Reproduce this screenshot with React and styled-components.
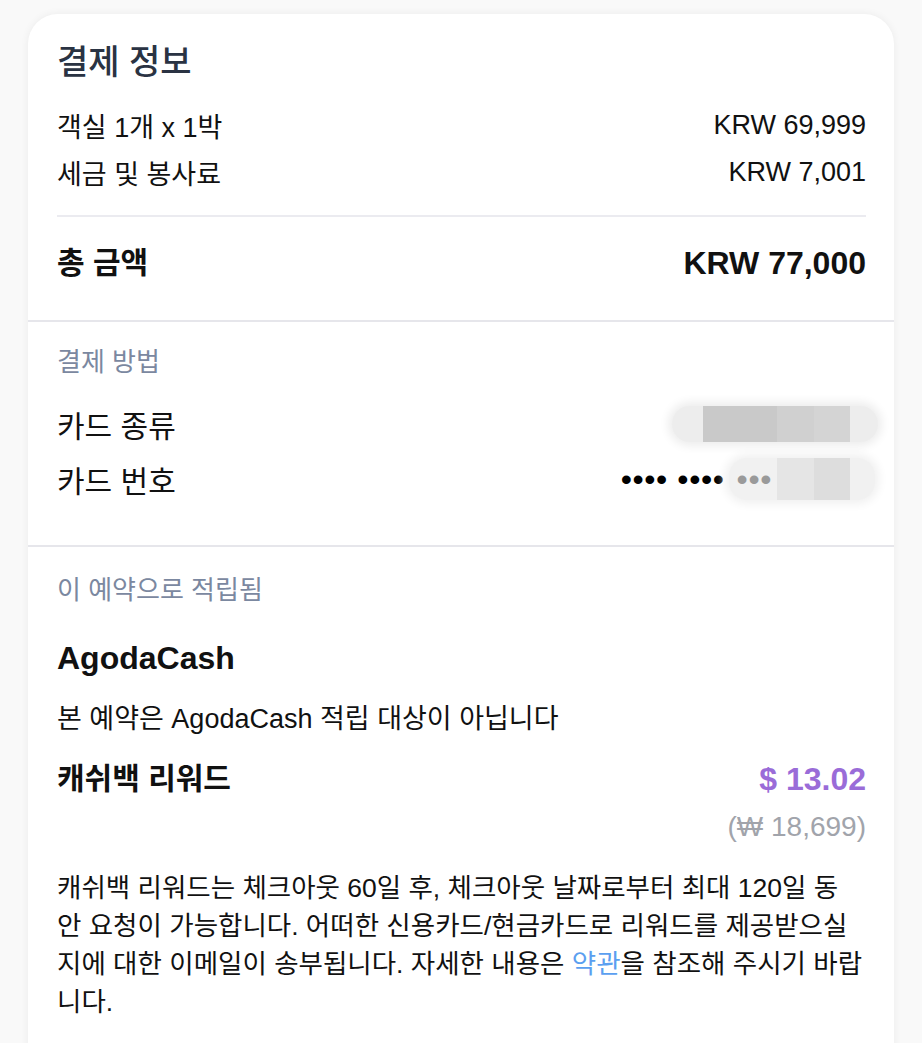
import React from "react";
import styled, { createGlobalStyle } from "styled-components";

const GlobalStyle = createGlobalStyle`
  body {
    margin: 0;
    background: #f9f9f9;
    font-family: "Liberation Sans", "Noto Sans CJK KR", sans-serif;
    color: #111;
  }
`;

const Card = styled.div`
  width: 866px;
  margin: 14px 0 0 28px;
  background: #fff;
  border-radius: 30px 30px 0 0;
  box-shadow: 0 0 8px rgba(0, 0, 0, 0.06);
`;

const Section = styled.section`
  padding: ${(p) => p.$top}px 28px ${(p) => p.$bottom}px 29px;
  border-bottom: ${(p) => (p.$last ? "none" : "2px solid #e6e6eb")};
`;

const Title = styled.h2`
  margin: 0 0 20px;
  font-size: 34px;
  line-height: 40px;
  font-weight: 500;
  color: #2a3343;
`;

const PriceRow = styled.div`
  display: flex;
  justify-content: space-between;
  align-items: center;
  height: 47px;
  font-size: 27px;
`;

const Divider = styled.div`
  height: 2px;
  background: #ebebf0;
  margin: 19px 0 26px;
`;

const TotalRow = styled.div`
  display: flex;
  justify-content: space-between;
  align-items: center;
  line-height: 40px;
  font-weight: 700;
  font-size: 30px;
`;

const Amount = styled.span`
  font-size: 32px;
`;

const Label = styled.div`
  font-size: 26px;
  line-height: 34px;
  color: #7b88a0;
`;

const CardRows = styled.div`
  margin-top: 17px;
`;

const CardRow = styled.div`
  display: flex;
  justify-content: space-between;
  align-items: center;
  height: 55px;
  font-size: 30px;
`;

const Masked = styled.div`
  display: flex;
  align-items: center;
`;

const Dots = styled.span`
  font-size: 32px;
  letter-spacing: 0.6px;
  color: ${(p) => p.$color || "#000"};
  line-height: 1;
`;

const Redacted = styled.div`
  display: flex;
  align-items: center;
  height: ${(p) => p.$h}px;
  padding: 0 ${(p) => p.$right}px 0 ${(p) => p.$left}px;
  margin-right: ${(p) => p.$pull}px;
  margin-left: ${(p) => p.$ml || 0}px;
  background: ${(p) => p.$bg};
  border-radius: 18px;
  box-shadow: 0 0 10px 4px ${(p) => p.$bg};
`;

const Block = styled.span`
  display: block;
  width: ${(p) => p.$w}px;
  height: 100%;
  background: ${(p) => p.$c};
`;

const Heading = styled.div`
  margin-top: 31px;
  font-size: 32px;
  line-height: 40px;
  font-weight: 700;
`;

const Note = styled.div`
  margin-top: 24px;
  font-size: 27px;
  line-height: 34px;
`;

const RewardRow = styled.div`
  display: flex;
  justify-content: space-between;
  align-items: flex-start;
  margin-top: 23px;
`;

const RewardLabel = styled.div`
  font-size: 30px;
  line-height: 40px;
  font-weight: 700;
`;

const RewardValue = styled.div`
  display: flex;
  flex-direction: column;
  align-items: flex-end;
`;

const Usd = styled.div`
  font-size: 32px;
  line-height: 40px;
  font-weight: 700;
  color: #9a6cd8;
`;

const Krw = styled.div`
  margin-top: 11px;
  font-size: 28px;
  line-height: 34px;
  color: #a1a4ab;
`;

const Paragraph = styled.p`
  margin: 25px 0 0;
  font-size: 26.5px;
  line-height: 38px;
  white-space: nowrap;
`;

const Link = styled.a`
  color: #5b9ff0;
  text-decoration: none;
`;

export default function App() {
  return (
    <>
      <GlobalStyle />
      <Card>
        <Section $top={28} $bottom={37}>
          <Title>결제 정보</Title>
          <PriceRow>
            <span>객실 1개 x 1박</span>
            <span>KRW 69,999</span>
          </PriceRow>
          <PriceRow>
            <span>세금 및 봉사료</span>
            <span>KRW 7,001</span>
          </PriceRow>
          <Divider />
          <TotalRow>
            <span>총 금액</span>
            <Amount>KRW 77,000</Amount>
          </TotalRow>
        </Section>

        <Section $top={23} $bottom={39}>
          <Label>결제 방법</Label>
          <CardRows>
            <CardRow>
              <span>카드 종류</span>
              <Redacted $h={36} $left={31} $right={28} $pull={-12} $bg="#ededed">
                <Block $w={74} $c="#c9c9c9" />
                <Block $w={37} $c="#d0d0d0" />
                <Block $w={36} $c="#d4d4d4" />
              </Redacted>
            </CardRow>
            <CardRow>
              <span>카드 번호</span>
              <Masked>
                <Dots>•••• ••••</Dots>
                <Redacted $h={42} $left={8} $right={25} $pull={-9} $ml={4} $bg="#f1f1f1">
                  <Dots $color="#9a9a9a">•••</Dots>
                  <Block $w={5} $c="transparent" />
                  <Block $w={37} $c="#e5e5e5" />
                  <Block $w={36} $c="#dddddd" />
                </Redacted>
              </Masked>
            </CardRow>
          </CardRows>
        </Section>

        <Section $top={26} $bottom={40} $last>
          <Label>이 예약으로 적립됨</Label>
          <Heading>AgodaCash</Heading>
          <Note>본 예약은 AgodaCash 적립 대상이 아닙니다</Note>
          <RewardRow>
            <RewardLabel>캐쉬백 리워드</RewardLabel>
            <RewardValue>
              <Usd>$ 13.02</Usd>
              <Krw>(₩ 18,699)</Krw>
            </RewardValue>
          </RewardRow>
          <Paragraph>
            캐쉬백 리워드는 체크아웃 60일 후, 체크아웃 날짜로부터 최대 120일 동
            <br />
            안 요청이 가능합니다. 어떠한 신용카드/현금카드로 리워드를 제공받으실
            <br />
            지에 대한 이메일이 송부됩니다. 자세한 내용은 <Link href="#">약관</Link>을 참조해 주시기 바랍
            <br />
            니다.
          </Paragraph>
        </Section>
      </Card>
    </>
  );
}
